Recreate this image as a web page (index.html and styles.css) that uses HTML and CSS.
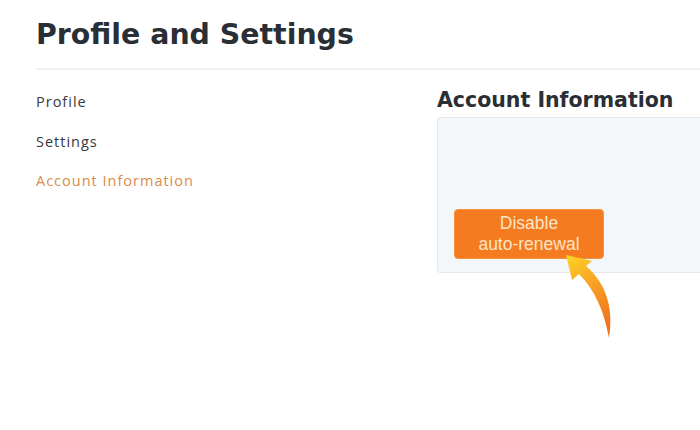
FILE: index.html
```html
<!DOCTYPE html>
<html lang="en">
<head>
<meta charset="utf-8">
<title>Profile and Settings</title>
<link rel="stylesheet" href="styles.css">
</head>
<body>
<div class="page">
  <header class="header">
    <h1 class="title">Profile and Settings</h1>
  </header>
  <div class="divider"></div>
  <div class="content">
    <nav class="sidebar">
      <a class="nav-item">Profile</a>
      <a class="nav-item">Settings</a>
      <a class="nav-item active">Account Information</a>
    </nav>
    <main class="main">
      <h2 class="section-title">Account Information</h2>
      <div class="info-box">
        <button class="renew-btn">Disable<br>auto-renewal</button>
      </div>
    </main>
  </div>
  <svg class="arrow" width="700" height="430" viewBox="0 0 700 430" aria-hidden="true">
    <defs>
      <linearGradient id="arrowGrad" gradientUnits="userSpaceOnUse" x1="570" y1="257" x2="610" y2="336">
        <stop offset="0" stop-color="#fdd024"/>
        <stop offset="0.35" stop-color="#f9a526"/>
        <stop offset="0.75" stop-color="#f27d1d"/>
        <stop offset="1" stop-color="#ee6b1a"/>
      </linearGradient>
    </defs>
    <path d="M566 255 L592 261 L586 266 C606 283 614 308 609 338 C604 311 595 290 579 274 L572 280 Z" fill="url(#arrowGrad)"/>
  </svg>
</div>
</body>
</html>
```
FILE: styles.css
```css
html, body {
  margin: 0;
  padding: 0;
  background: #ffffff;
  overflow: hidden;
}
body {
  font-family: "Open Sans", "Liberation Sans", sans-serif;
  width: 700px;
  height: 430px;
}
.page {
  position: relative;
  width: 700px;
  height: 430px;
  overflow: hidden;
}
.header {
  padding: 18px 36px 0;
}
.title {
  margin: 0;
  font-family: "DejaVu Sans", "Open Sans", sans-serif;
  font-size: 28.4px;
  line-height: 34px;
  font-weight: 700;
  color: #2a2e35;
}
.divider {
  margin: 16px 0 0 36px;
  height: 2px;
  background: #eef0f2;
}
.content {
  display: flex;
  padding-left: 36px;
}
.sidebar {
  width: 401px;
  flex: none;
  display: flex;
  flex-direction: column;
  gap: 19.5px;
  padding-top: 22px;
}
.nav-item {
  font-size: 14.5px;
  line-height: 20px;
  color: #36393e;
  letter-spacing: 1px;
}
.nav-item.active {
  color: #d98b4b;
}
.main {
  flex: 1;
  padding-top: 17.2px;
  min-width: 0;
}
.section-title {
  margin: 0;
  font-family: "DejaVu Sans", "Open Sans", sans-serif;
  font-size: 20.5px;
  line-height: 26px;
  font-weight: 700;
  color: #2a2e35;
}
.info-box {
  margin-top: 4px;
  width: 300px;
  height: 156px;
  box-sizing: border-box;
  background: #f4f7fa;
  border: 1px solid #e4e9ed;
  border-radius: 3px;
  display: flex;
  align-items: flex-end;
  padding: 0 0 13px 16px;
}
.renew-btn {
  width: 150px;
  height: 50px;
  box-sizing: border-box;
  padding: 3px 0 5px;
  border: 1px solid #f7933e;
  border-radius: 4px;
  background: #f47b1f;
  color: #fde4c8;
  font-family: "Liberation Sans", Arial, sans-serif;
  font-size: 17.5px;
  line-height: 21px;
  text-align: center;
}
.arrow {
  position: absolute;
  left: 0;
  top: 0;
  pointer-events: none;
}
```
